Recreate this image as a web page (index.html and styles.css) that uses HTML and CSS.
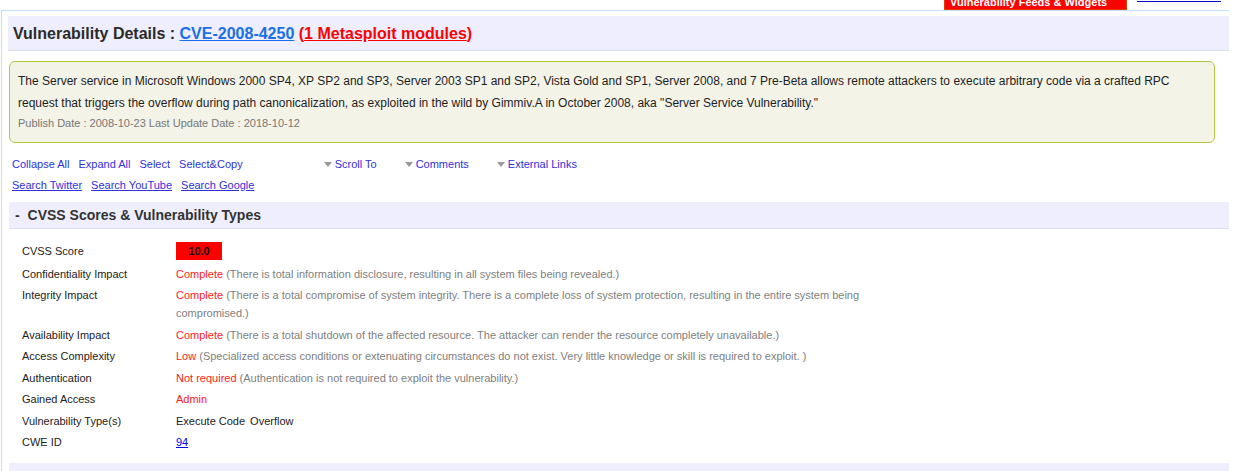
FILE: index.html
```html
<!DOCTYPE html>
<html>
<head>
<meta charset="utf-8">
<link rel="stylesheet" href="styles.css">
</head>
<body>
<div class="page">
  <div class="topbar">
    <a class="feeds-btn" href="#">Vulnerability Feeds &amp; Widgets</a>
    <span class="top-link-line"></span>
  </div>
  <div class="main">
    <h1 class="title">Vulnerability Details : <a class="cve" href="#">CVE-2008-4250</a> <span class="msf">(<a href="#">1 Metasploit modules</a>)</span></h1>
    <div class="summary">
      <p class="desc">The Server service in Microsoft Windows 2000 SP4, XP SP2 and SP3, Server 2003 SP1 and SP2, Vista Gold and SP1, Server 2008, and 7 Pre-Beta allows remote attackers to execute arbitrary code via a crafted RPC request that triggers the overflow during path canonicalization, as exploited in the wild by Gimmiv.A in October 2008, aka "Server Service Vulnerability."</p>
      <p class="dates">Publish Date : 2008-10-23 Last Update Date : 2018-10-12</p>
    </div>
    <div class="tools">
      <div class="tool-row">
        <a href="#">Collapse All</a>
        <a href="#">Expand All</a>
        <a href="#">Select</a>
        <a href="#">Select&amp;Copy</a>
        <span class="menu m1"><span class="tri"></span><a href="#">Scroll To</a></span>
        <span class="menu m2"><span class="tri"></span><a href="#">Comments</a></span>
        <span class="menu m3"><span class="tri"></span><a href="#">External Links</a></span>
      </div>
      <div class="tool-row under">
        <a href="#">Search Twitter</a>
        <a href="#">Search YouTube</a>
        <a href="#">Search Google</a>
      </div>
    </div>
    <div class="section-head"><span class="minus">-</span> CVSS Scores &amp; Vulnerability Types</div>
    <table class="cvss">
      <tr><td class="lbl">CVSS Score</td><td class="val"><span class="score">10.0</span></td></tr>
      <tr><td class="lbl">Confidentiality Impact</td><td class="val"><span class="red">Complete</span> <span class="note">(There is total information disclosure, resulting in all system files being revealed.)</span></td></tr>
      <tr><td class="lbl">Integrity Impact</td><td class="val"><span class="red">Complete</span> <span class="note">(There is a total compromise of system integrity. There is a complete loss of system protection, resulting in the entire system being compromised.)</span></td></tr>
      <tr><td class="lbl">Availability Impact</td><td class="val"><span class="red">Complete</span> <span class="note">(There is a total shutdown of the affected resource. The attacker can render the resource completely unavailable.)</span></td></tr>
      <tr><td class="lbl">Access Complexity</td><td class="val"><span class="red">Low</span> <span class="note">(Specialized access conditions or extenuating circumstances do not exist. Very little knowledge or skill is required to exploit. )</span></td></tr>
      <tr><td class="lbl">Authentication</td><td class="val"><span class="red">Not required</span> <span class="note">(Authentication is not required to exploit the vulnerability.)</span></td></tr>
      <tr><td class="lbl">Gained Access</td><td class="val"><span class="red">Admin</span></td></tr>
      <tr><td class="lbl">Vulnerability Type(s)</td><td class="val"><span class="vtype">Execute Code</span><span class="vtype">Overflow</span></td></tr>
      <tr><td class="lbl">CWE ID</td><td class="val"><a class="cwe" href="#">94</a></td></tr>
    </table>
    <div class="section-head next"></div>
  </div>
</div>
</body>
</html>
```
FILE: styles.css
```css
html, body {
  margin: 0;
  padding: 0;
  background: #fff;
  font-family: "Liberation Sans", Arial, sans-serif;
  color: #222;
  overflow: hidden;
}
.page {
  width: 1240px;
}
.topbar {
  height: 10px;
  display: flex;
  align-items: flex-end;
  justify-content: flex-end;
  padding-right: 19px;
  gap: 10px;
}
.feeds-btn {
  box-sizing: border-box;
  width: 183px;
  height: 24px;
  flex: none;
  background: #ff0000;
  border: 1px solid #e43c00;
  color: #fff;
  font-weight: bold;
  font-size: 11px;
  line-height: 14px;
  padding: 0 5px;
  display: flex;
  align-items: flex-end;
  text-decoration: none;
}
.top-link-line {
  align-self: flex-start;
  margin-top: 1px;
  width: 84px;
  height: 1px;
  background: #0000cc;
}
.main {
  width: 1228px;
  margin-left: 1px;
  border-top: 1px solid #c4dcf8;
  border-left: 1px solid #c4dcf8;
  box-sizing: border-box;
  padding: 5px 0 0 6px;
  height: 461px;
}
.title {
  margin: 0;
  height: 34px;
  background: #eeeefe;
  border-bottom: 1px solid #dcdff2;
  font-size: 16px;
  font-weight: bold;
  color: #2a2a2a;
  line-height: 35px;
  padding-left: 5px;
}
.title .cve {
  color: #1a6fe8;
  text-decoration: underline;
}
.msf, .msf a {
  color: #ff0000;
}
.summary {
  margin: 10px 14px 0 1px;
  background: #f3f3e8;
  border: 1px solid #b3c93a;
  border-radius: 6px;
  padding: 8px 8px 9px;
}
.desc {
  margin: 0;
  font-size: 12px;
  line-height: 22px;
  color: #1e1e1e;
}
.dates {
  margin: 0;
  font-size: 11px;
  line-height: 19px;
  color: #777;
}
.tools {
  margin-top: 10px;
  padding-left: 4px;
  font-size: 11px;
}
.tool-row {
  display: flex;
  align-items: center;
  height: 21px;
}
.tool-row a {
  color: #3030dd;
  text-decoration: none;
  margin-right: 9px;
}
.tool-row.under a {
  text-decoration: underline;
}
.menu {
  display: inline-flex;
  align-items: center;
}
.menu a { margin-right: 0; }
.m1 { margin-left: 72px; }
.m2 { margin-left: 28px; }
.m3 { margin-left: 28px; }
.tri {
  width: 0;
  height: 0;
  border-left: 4.5px solid transparent;
  border-right: 4.5px solid transparent;
  border-top: 5px solid #999;
  margin-right: 3px;
  margin-top: 2px;
}
.section-head {
  margin: 7px 0 0 1px;
  height: 26px;
  background: #eeeefe;
  border-bottom: 1px solid #dcdff2;
  font-size: 14px;
  font-weight: bold;
  color: #333;
  line-height: 27px;
  padding-left: 6px;
}
.minus {
  margin-right: 4px;
}
.section-head.next {
  margin-top: 10px;
}
.cvss {
  border-collapse: collapse;
  margin: 11px 0 0 14px;
  font-size: 11px;
}
.cvss td {
  padding: 2px 0 1.5px;
  line-height: 18px;
  vertical-align: top;
}
.cvss .lbl {
  width: 154px;
  color: #222;
}
.cvss .val {
  width: 700px;
}
.score {
  display: inline-block;
  width: 46px;
  height: 18px;
  line-height: 18px;
  background: #ff0000;
  color: #111;
  font-weight: bold;
  text-align: center;
  margin: 0 0 1px;
  vertical-align: top;
}
.red {
  color: #ff1a1a;
}
.note {
  color: #808080;
}
.vtype {
  color: #222;
  margin-right: 5px;
}
.cwe {
  color: #0000ee;
  text-decoration: underline;
}
```
